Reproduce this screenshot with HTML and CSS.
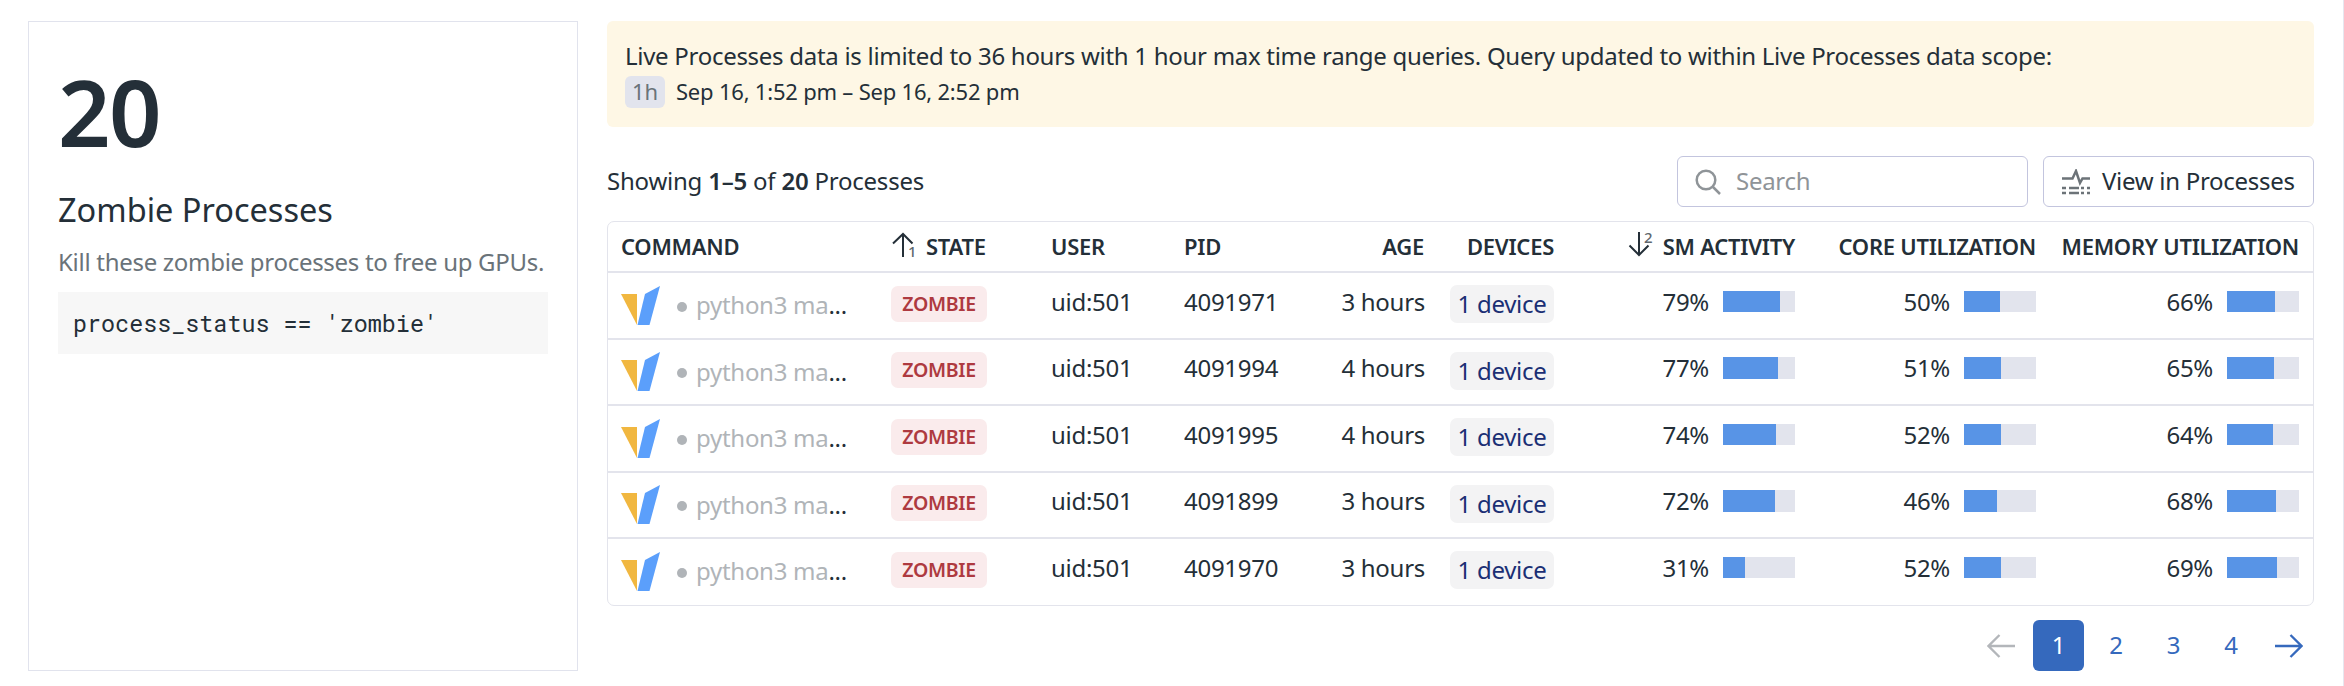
FILE: index.html
```html
<!DOCTYPE html>
<html lang="en">
<head>
<meta charset="utf-8">
<title>Zombie Processes</title>
<link rel="stylesheet" href="styles.css">
</head>
<body>
<svg class="defs" width="0" height="0" aria-hidden="true">
  <symbol id="logo" viewBox="0 0 39 39"><path d="M0 8h16v31z" fill="#f1b740"/><path d="M24 8 39 0 28.500 39H16.500z" fill="#5b9ffb"/></symbol>
</svg>
<div class="page">
  <aside class="summary">
    <div class="count">20</div>
    <h2 class="title">Zombie Processes</h2>
    <p class="hint">Kill these zombie processes to free up GPUs.</p>
    <pre class="code">process_status == 'zombie'</pre>
  </aside>
  <main class="main">
    <div class="notice">
      <div class="notice-text">Live Processes data is limited to 36 hours with 1 hour max time range queries. Query updated to within Live Processes data scope:</div>
      <div class="range"><span class="span-badge">1h</span><span class="range-text">Sep 16, 1:52 pm – Sep 16, 2:52 pm</span></div>
    </div>
    <div class="toolbar">
      <div class="showing">Showing <b>1–5</b> of <b>20</b> Processes</div>
      <div class="search">
        <svg class="icon-search" width="26" height="26" viewBox="0 0 26 26" fill="none" stroke="#8f9498" stroke-width="2.500"><circle cx="11" cy="11" r="9.300"/><path d="M17.500 17.500l7.500 7.500"/></svg>
        <span class="label">Search</span>
      </div>
      <div class="button">
        <svg class="icon-proc" width="28" height="26" viewBox="0 0 28 26" fill="none" stroke="#6c7378" stroke-width="2.500"><path d="M0 9.500h10.500L14 2l4 12 2.500-4.500H28"/><path d="M0 19h4M7 19h10M19 19h3M25 19h3M0 24h4M7 24h10M19 24h3M25 24h3"/></svg>
        <span class="label">View in Processes</span>
      </div>
    </div>
    <div class="table">
      <div class="row head">
        <div class="cell">COMMAND</div>
        <div class="cell"><svg class="sort" width="24" height="34" viewBox="0 -4 24 34"><path d="M12 25V2M2 11.500l10-9.500L21.500 11.500" fill="none" stroke="#242f38" stroke-width="2"/><text x="17" y="25" class="sort-num">1</text></svg><span>STATE</span></div>
        <div class="cell">USER</div>
        <div class="cell">PID</div>
        <div class="cell right">AGE</div>
        <div class="cell right">DEVICES</div>
        <div class="cell right"><svg class="sort" width="24" height="34" viewBox="0 -4 24 34"><path d="M11 0v23M1.500 13.500l9.500 9.500 9.500-9.500" fill="none" stroke="#242f38" stroke-width="2"/><text x="16" y="11" class="sort-num">2</text></svg><span>SM ACTIVITY</span></div>
        <div class="cell right">CORE UTILIZATION</div>
        <div class="cell right">MEMORY UTILIZATION</div>
      </div>
      <div class="row">
        <div class="cell command"><svg class="logo" width="39" height="39"><use href="#logo"/></svg><i class="dot"></i><span class="cmd">python3 ma<em>...</em></span></div>
        <div class="cell"><span class="zombie">ZOMBIE</span></div>
        <div class="cell">uid:501</div><div class="cell">4091971</div><div class="cell right age">3 hours</div>
        <div class="cell right"><span class="device">1 device</span></div>
        <div class="cell right">79%<span class="bar"><span style="width:79%"></span></span></div>
        <div class="cell right">50%<span class="bar"><span style="width:50%"></span></span></div>
        <div class="cell right">66%<span class="bar"><span style="width:66%"></span></span></div>
      </div>
      <div class="row even">
        <div class="cell command"><svg class="logo" width="39" height="39"><use href="#logo"/></svg><i class="dot"></i><span class="cmd">python3 ma<em>...</em></span></div>
        <div class="cell"><span class="zombie">ZOMBIE</span></div>
        <div class="cell">uid:501</div><div class="cell">4091994</div><div class="cell right age">4 hours</div>
        <div class="cell right"><span class="device">1 device</span></div>
        <div class="cell right">77%<span class="bar"><span style="width:77%"></span></span></div>
        <div class="cell right">51%<span class="bar"><span style="width:51%"></span></span></div>
        <div class="cell right">65%<span class="bar"><span style="width:65%"></span></span></div>
      </div>
      <div class="row">
        <div class="cell command"><svg class="logo" width="39" height="39"><use href="#logo"/></svg><i class="dot"></i><span class="cmd">python3 ma<em>...</em></span></div>
        <div class="cell"><span class="zombie">ZOMBIE</span></div>
        <div class="cell">uid:501</div><div class="cell">4091995</div><div class="cell right age">4 hours</div>
        <div class="cell right"><span class="device">1 device</span></div>
        <div class="cell right">74%<span class="bar"><span style="width:74%"></span></span></div>
        <div class="cell right">52%<span class="bar"><span style="width:52%"></span></span></div>
        <div class="cell right">64%<span class="bar"><span style="width:64%"></span></span></div>
      </div>
      <div class="row even">
        <div class="cell command"><svg class="logo" width="39" height="39"><use href="#logo"/></svg><i class="dot"></i><span class="cmd">python3 ma<em>...</em></span></div>
        <div class="cell"><span class="zombie">ZOMBIE</span></div>
        <div class="cell">uid:501</div><div class="cell">4091899</div><div class="cell right age">3 hours</div>
        <div class="cell right"><span class="device">1 device</span></div>
        <div class="cell right">72%<span class="bar"><span style="width:72%"></span></span></div>
        <div class="cell right">46%<span class="bar"><span style="width:46%"></span></span></div>
        <div class="cell right">68%<span class="bar"><span style="width:68%"></span></span></div>
      </div>
      <div class="row">
        <div class="cell command"><svg class="logo" width="39" height="39"><use href="#logo"/></svg><i class="dot"></i><span class="cmd">python3 ma<em>...</em></span></div>
        <div class="cell"><span class="zombie">ZOMBIE</span></div>
        <div class="cell">uid:501</div><div class="cell">4091970</div><div class="cell right age">3 hours</div>
        <div class="cell right"><span class="device">1 device</span></div>
        <div class="cell right">31%<span class="bar"><span style="width:31%"></span></span></div>
        <div class="cell right">52%<span class="bar"><span style="width:52%"></span></span></div>
        <div class="cell right">69%<span class="bar"><span style="width:69%"></span></span></div>
      </div>
    </div>
    <nav class="pager">
      <span class="page-item off"><svg width="28" height="24" viewBox="0 0 28 24"><path d="M28 12H2M12.500 1 1.500 12l11 11" fill="none" stroke="currentColor" stroke-width="2.300"/></svg></span>
      <span class="page-item num active">1</span>
      <span class="page-item num">2</span>
      <span class="page-item num">3</span>
      <span class="page-item num">4</span>
      <span class="page-item"><svg width="28" height="24" viewBox="0 0 28 24"><path d="M0 12h26M15.500 1l11 11-11 11" fill="none" stroke="currentColor" stroke-width="2.300"/></svg></span>
    </nav>
  </main>
</div>
</body>
</html>
```

FILE: styles.css
```css
* { box-sizing: border-box; }
body {
  margin: 0;
  background: #fff;
  color: #242f38;
  font-family: "Noto Sans", sans-serif;
  font-size: 24px;
  line-height: 32px;
  letter-spacing: -0.285px;
}
.defs { display: block; }
.page {
  display: flex;
  gap: 29px;
  height: 686px;
  padding: 21px 29px 15px 28px;
  border-right: 1px solid #e6e7ef;
}
.summary {
  width: 550px;
  padding: 34px 29px 0;
  border: 1px solid #e1e3ed;
}
.count { font-size: 92px; line-height: 112px; font-weight: 600; letter-spacing: -1.500px; }
.title { margin: 20px 0 0; font-size: 32.500px; line-height: 44px; font-weight: 400; letter-spacing: 0; }
.hint { margin: 14px 0 0; color: #6a7379; white-space: nowrap; }
.code {
  margin: 14px 0 0;
  padding: 0 15px;
  height: 62px;
  background: #f7f7f7;
  font-family: "Roboto Mono", "DejaVu Sans Mono", monospace;
  font-size: 23.400px;
  line-height: 61px;
  letter-spacing: 0;
}
.main { width: 1707px; }
.notice {
  height: 106px;
  padding: 19px 18px 0;
  border-radius: 6px;
  background: #fef7e5;
  white-space: nowrap;
}
.range { display: flex; gap: 11px; margin-top: 4px; font-size: 22px; line-height: 31px; letter-spacing: -0.210px; }
.span-badge {
  width: 40px;
  height: 32px;
  border-radius: 6px;
  background: #e2e4ed;
  color: #6a7379;
  text-align: center;
}
.toolbar { display: flex; align-items: center; height: 51px; margin-top: 29px; }
.showing { flex: 1; padding-bottom: 2px; letter-spacing: -0.220px; }
.showing b { font-weight: 600; }
.label { padding-bottom: 2px; }
.search, .button {
  display: flex;
  align-items: center;
  height: 51px;
  border: 1px solid #c3c5de;
  border-radius: 6px;
}
.search { width: 351px; padding-left: 17px; gap: 15px; color: #8f9498; }
.button { width: 271px; margin-left: 15px; padding-left: 18px; gap: 12px; white-space: nowrap; }
.table {
  display: grid;
  grid-template-rows: 51px 67px 66px 67px 66px 66px;
  margin-top: 14px;
  border: 1px solid #e3e4ec;
  border-radius: 7px;
}
.row {
  display: grid;
  grid-template-columns: 269px 160px 133px 134px 134px 130px 241px 241px 263px;
  border-bottom: 2px solid #e3e4ec;
}
.row:last-child { border-bottom: 0; }
.cell { display: flex; align-items: flex-start; padding: 13px 14px 0; white-space: nowrap; }
.cell:first-child { padding-left: 13px; }
.right { justify-content: flex-end; }
.age { padding-right: 13px; }
.even .cell { padding-top: 12px; }
.head .cell { padding-top: 8px; font-size: 22px; font-weight: 600; letter-spacing: -0.260px; }
.sort { margin-right: 11px; margin-top: -2px; overflow: visible; }
.sort-num { font-size: 15px; font-weight: 500; fill: #5f676e; letter-spacing: 0; }
.logo { margin-right: 17px; }
.dot { width: 10px; height: 10px; margin: 16px 9px 0 0; border-radius: 50%; background: #b0b4b8; }
.cmd { margin-top: 3px; color: #b0b4b8; }
.even .cmd { margin-top: 4px; }
.cmd em { font-style: normal; color: #242f38; }
.zombie {
  width: 96px;
  height: 36px;
  border-radius: 7px;
  background: #faebec;
  color: #ae3a40;
  font-size: 19.500px;
  line-height: 35px;
  font-weight: 600;
  text-align: center;
}
.device {
  width: 104px;
  flex: none;
  height: 38px;
  margin-top: -1px;
  border-radius: 7px;
  background: #f3f3f4;
  color: #1b2f74;
  line-height: 37px;
  text-align: center;
}
.even .device { margin-top: 0; }
.bar { width: 72px; height: 21px; margin: 5px 0 0 14px; background: #e2e4ed; }
.even .bar { height: 22px; }
.bar span { display: block; height: 100%; background: #5894e6; }
.pager { display: flex; justify-content: flex-end; gap: 6.500px; margin-top: 14px; }
.page-item {
  display: flex;
  align-items: center;
  justify-content: center;
  width: 51px;
  height: 51px;
  border-radius: 6px;
  color: #3569bd;
}
.page-item.num { padding-bottom: 1px; }
.page-item.off { color: #b3b6ba; }
.page-item.active { background: #3569bd; color: #fff; }
```
